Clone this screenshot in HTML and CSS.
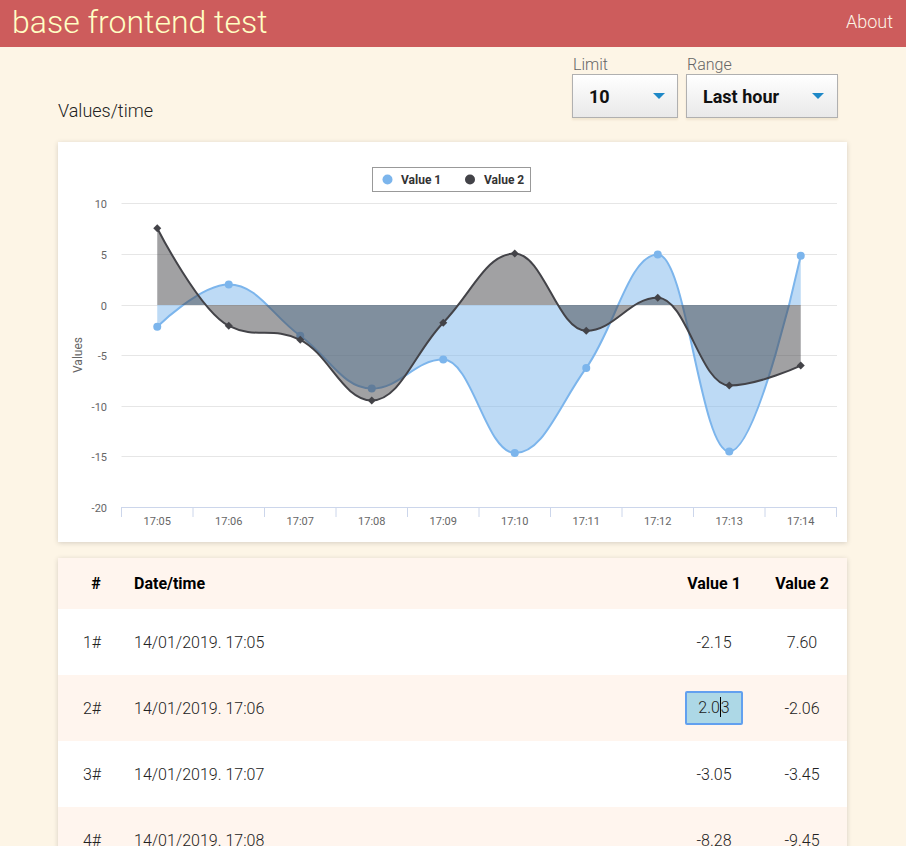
FILE: index.html
```html
<!DOCTYPE html>
<html lang="en">
<head>
<meta charset="utf-8">
<title>base frontend test</title>
<link rel="stylesheet" href="styles.css">
</head>
<body>
<header class="topbar">
  <span class="brand">base frontend test</span>
  <a class="nav-link">About</a>
</header>
<main class="page">
  <div class="toolbar">
    <h2 class="section-title">Values/time</h2>
    <div class="filters">
      <div class="field">
        <label class="field-label">Limit</label>
        <div class="select select-limit"><span class="select-value">10</span><i class="select-arrow"></i></div>
      </div>
      <div class="field">
        <label class="field-label">Range</label>
        <div class="select select-range"><span class="select-value">Last hour</span><i class="select-arrow"></i></div>
      </div>
    </div>
  </div>

  <section class="card chart-card">
    <svg class="chart" width="789" height="400" viewBox="0 0 789 400">
      <g class="grid">
        <line x1="63.5" x2="779" y1="61.5" y2="61.5"/>
        <line x1="63.5" x2="779" y1="112.5" y2="112.5"/>
        <line x1="63.5" x2="779" y1="163.5" y2="163.5"/>
        <line x1="63.5" x2="779" y1="213.5" y2="213.5"/>
        <line x1="63.5" x2="779" y1="264.5" y2="264.5"/>
        <line x1="63.5" x2="779" y1="314.5" y2="314.5"/>
      </g>
      <g class="x-axis">
        <line x1="63.5" x2="779" y1="365.5" y2="365.5"/>
        <path d="M63.5 365V375M135 365V375M206.5 365V375M278 365V375M349.5 365V375M421 365V375M492.5 365V375M564 365V375M635.5 365V375M707 365V375M778.5 365V375"/>
      </g>
      <g class="axis-labels y-labels">
        <text x="49" y="65.5">10</text>
        <text x="49" y="116.5">5</text>
        <text x="49" y="167.5">0</text>
        <text x="49" y="217.5">-5</text>
        <text x="49" y="268.5">-10</text>
        <text x="49" y="318.5">-15</text>
        <text x="49" y="369.5">-20</text>
      </g>
      <text class="axis-title" transform="translate(24,213) rotate(-90)">Values</text>
      <g class="axis-labels x-labels">
        <text x="99.25" y="383">17:05</text>
        <text x="170.75" y="383">17:06</text>
        <text x="242.25" y="383">17:07</text>
        <text x="313.75" y="383">17:08</text>
        <text x="385.25" y="383">17:09</text>
        <text x="456.75" y="383">17:10</text>
        <text x="528.25" y="383">17:11</text>
        <text x="599.75" y="383">17:12</text>
        <text x="671.25" y="383">17:13</text>
        <text x="742.75" y="383">17:14</text>
      </g>

      <g class="series series-1">
        <path class="area" d="M99.25 184.7C99.25 184.7 142.15 142.5 170.75 142.5C199.35 142.5 213.65 172.98 242.25 193.8C270.85 214.62 285.15 246.6 313.75 246.6C342.35 246.6 356.65 217.6 385.25 217.6C413.85 217.6 428.15 311 456.75 311C485.35 311 499.65 265.6 528.25 225.9C556.85 186.2 571.15 112.5 599.75 112.5C628.35 112.5 642.65 309.5 671.25 309.5C699.85 309.5 742.75 113.8 742.75 113.8L742.75 163L99.25 163Z"/>
        <path class="line" d="M99.25 184.7C99.25 184.7 142.15 142.5 170.75 142.5C199.35 142.5 213.65 172.98 242.25 193.8C270.85 214.62 285.15 246.6 313.75 246.6C342.35 246.6 356.65 217.6 385.25 217.6C413.85 217.6 428.15 311 456.75 311C485.35 311 499.65 265.6 528.25 225.9C556.85 186.2 571.15 112.5 599.75 112.5C628.35 112.5 642.65 309.5 671.25 309.5C699.85 309.5 742.75 113.8 742.75 113.8"/>
        <g class="markers">
          <circle cx="99.25" cy="184.7" r="4"/>
          <circle cx="170.75" cy="142.5" r="4"/>
          <circle cx="242.25" cy="193.8" r="4"/>
          <circle cx="313.75" cy="246.6" r="4"/>
          <circle cx="385.25" cy="217.6" r="4"/>
          <circle cx="456.75" cy="311" r="4"/>
          <circle cx="528.25" cy="225.9" r="4"/>
          <circle cx="599.75" cy="112.5" r="4"/>
          <circle cx="671.25" cy="309.5" r="4"/>
          <circle cx="742.75" cy="113.8" r="4"/>
        </g>
      </g>

      <g class="series series-2">
        <path class="area" d="M99.25 86.2C99.25 86.2 142.15 169.8 170.75 183.8C199.35 197.8 213.65 183.8 242.25 197.8C270.85 211.8 285.15 258.4 313.75 258.4C342.35 258.4 356.65 210.08 385.25 180.7C413.85 151.32 428.15 111.5 456.75 111.5C485.35 111.5 499.65 188.7 528.25 188.7C556.85 188.7 571.15 155.7 599.75 155.7C628.35 155.7 642.65 243.5 671.25 243.5C699.85 243.5 742.75 223.6 742.75 223.6L742.75 163L99.25 163Z"/>
        <path class="line" d="M99.25 86.2C99.25 86.2 142.15 169.8 170.75 183.8C199.35 197.8 213.65 183.8 242.25 197.8C270.85 211.8 285.15 258.4 313.75 258.4C342.35 258.4 356.65 210.08 385.25 180.7C413.85 151.32 428.15 111.5 456.75 111.5C485.35 111.5 499.65 188.7 528.25 188.7C556.85 188.7 571.15 155.7 599.75 155.7C628.35 155.7 642.65 243.5 671.25 243.5C699.85 243.5 742.75 223.6 742.75 223.6"/>
        <path class="markers" d="M99.25 82.2L103.25 86.2L99.25 90.2L95.25 86.2ZM170.75 179.8L174.75 183.8L170.75 187.8L166.75 183.8ZM242.25 193.8L246.25 197.8L242.25 201.8L238.25 197.8ZM313.75 254.4L317.75 258.4L313.75 262.4L309.75 258.4ZM385.25 176.7L389.25 180.7L385.25 184.7L381.25 180.7ZM456.75 107.5L460.75 111.5L456.75 115.5L452.75 111.5ZM528.25 184.7L532.25 188.7L528.25 192.7L524.25 188.7ZM599.75 151.7L603.75 155.7L599.75 159.7L595.75 155.7ZM671.25 239.5L675.25 243.5L671.25 247.5L667.25 243.5ZM742.75 219.6L746.75 223.6L742.75 227.6L738.75 223.6Z"/>
      </g>

      <g class="legend">
        <rect x="314.5" y="25.5" width="158" height="24"/>
        <circle cx="329.5" cy="37.5" r="5" class="legend-dot-1"/>
        <text x="343" y="42">Value 1</text>
        <circle cx="412" cy="37.5" r="5" class="legend-dot-2"/>
        <text x="426" y="42">Value 2</text>
      </g>
    </svg>
  </section>

  <section class="card table-card">
    <table class="data-table">
      <colgroup>
        <col class="col-index">
        <col>
        <col class="col-value-1">
        <col class="col-value-2">
      </colgroup>
      <thead>
        <tr><th class="c-center">#</th><th class="c-left">Date/time</th><th class="c-center">Value 1</th><th class="c-center">Value 2</th></tr>
      </thead>
      <tbody>
        <tr><td class="c-index">1#</td><td>14/01/2019. 17:05</td><td class="c-center">-2.15</td><td class="c-center">7.60</td></tr>
        <tr><td class="c-index">2#</td><td>14/01/2019. 17:06</td><td class="c-center"><span class="cell-edit">2.0<span class="text-caret"></span>3</span></td><td class="c-center">-2.06</td></tr>
        <tr><td class="c-index">3#</td><td>14/01/2019. 17:07</td><td class="c-center">-3.05</td><td class="c-center">-3.45</td></tr>
        <tr><td class="c-index">4#</td><td>14/01/2019. 17:08</td><td class="c-center">-8.28</td><td class="c-center">-9.45</td></tr>
      </tbody>
    </table>
  </section>
</main>
</body>
</html>
```

FILE: styles.css
```css
* { box-sizing: border-box; }

html, body {
  margin: 0;
  padding: 0;
}

body {
  background: #fdf5e6;
  font-family: Roboto, "Liberation Sans", sans-serif;
  color: #222;
}

.topbar {
  height: 47px;
  background: #cd5c5c;
  display: flex;
  align-items: center;
  justify-content: space-between;
  padding: 0 13px 0 12px;
}

.brand {
  font-size: 32px;
  font-weight: 300;
  color: #ffffc4;
  line-height: 47px;
  margin-top: -3px;
}

.nav-link {
  font-size: 18px;
  font-weight: 300;
  color: #fdf5e6;
  line-height: 47px;
  margin-top: -4px;
}

.page {
  width: 789px;
  margin: 0 0 0 58px;
}

.toolbar {
  display: flex;
  justify-content: space-between;
  align-items: flex-end;
  padding: 8px 9px 0 0;
  margin-bottom: 24px;
}

.section-title {
  margin: 0 0 -5px 0;
  font-size: 18px;
  font-weight: 300;
  line-height: 24px;
  color: #222;
}

.filters {
  display: flex;
  gap: 8px;
}

.field {
  display: flex;
  flex-direction: column;
}

.field-label {
  font-size: 16px;
  font-weight: 300;
  color: #666;
  line-height: 19px;
  padding-left: 1px;
}

.select {
  height: 44px;
  border: 1px solid #b0b0b0;
  background: linear-gradient(#ffffff, #e9e9e9);
  box-shadow: 0 2px 2px rgba(160, 120, 60, 0.12);
  display: flex;
  align-items: center;
  justify-content: space-between;
  padding: 0 12px 0 16px;
}

.select-limit { width: 106px; }
.select-range { width: 152px; padding-right: 13px; }

.select-value {
  font-size: 18px;
  font-weight: 700;
  color: #111;
}

.select-arrow {
  width: 0;
  height: 0;
  border-left: 6px solid transparent;
  border-right: 6px solid transparent;
  border-top: 6px solid #1e88c7;
}

.card {
  background: #fff;
  box-shadow: 0 1px 5px rgba(0, 0, 0, 0.16);
}

.chart-card {
  height: 400px;
  margin-bottom: 16px;
}

.chart {
  display: block;
  font-family: Roboto, "Liberation Sans", sans-serif;
}

.grid line {
  stroke: #e6e6e6;
  stroke-width: 1;
}

.x-axis line,
.x-axis path {
  stroke: #ccd6eb;
  stroke-width: 1;
  fill: none;
}

.axis-labels text {
  font-size: 11px;
  fill: #666;
}

.y-labels text { text-anchor: end; }
.x-labels text { text-anchor: middle; }

.axis-title {
  font-size: 12px;
  fill: #666;
  text-anchor: middle;
}

.series-1 .area { fill: rgba(124, 181, 236, 0.5); }
.series-1 .line { fill: none; stroke: #7cb5ec; stroke-width: 2; }
.series-1 .markers circle { fill: #7cb5ec; }

.series-2 .area { fill: rgba(67, 67, 72, 0.5); }
.series-2 .line { fill: none; stroke: #434348; stroke-width: 2; }
.series-2 .markers { fill: #434348; }

.legend rect {
  fill: none;
  stroke: #999;
  stroke-width: 1;
}

.legend text {
  font-size: 12px;
  font-weight: 700;
  fill: #333;
}

.legend-dot-1 { fill: #7cb5ec; }
.legend-dot-2 { fill: #434348; }

.table-card {
  overflow: hidden;
}

.data-table {
  width: 100%;
  border-collapse: collapse;
  table-layout: fixed;
}

.col-index { width: 76px; }
.col-value-1 { width: 86px; }
.col-value-2 { width: 90px; }

.data-table th {
  height: 51px;
  font-size: 16px;
  font-weight: 700;
  color: #000;
  background: #fff5ee;
  padding: 0;
}

.data-table td {
  height: 66px;
  font-size: 16px;
  font-weight: 300;
  color: #222;
  padding: 0;
}

.data-table tbody tr:nth-child(even) td {
  background: #fff5ee;
}

.c-center { text-align: center; }
.c-left { text-align: left; }

.data-table td.c-index {
  text-align: center;
  padding-right: 8px;
}

.cell-edit {
  display: inline-block;
  width: 58px;
  height: 34px;
  line-height: 30px;
  background: #add8e6;
  border: 2px solid #62a0ef;
  border-radius: 2px;
  text-align: center;
}

.text-caret {
  display: inline-block;
  width: 0;
  height: 20px;
  border-left: 1px solid #000;
  vertical-align: -4px;
}
```
